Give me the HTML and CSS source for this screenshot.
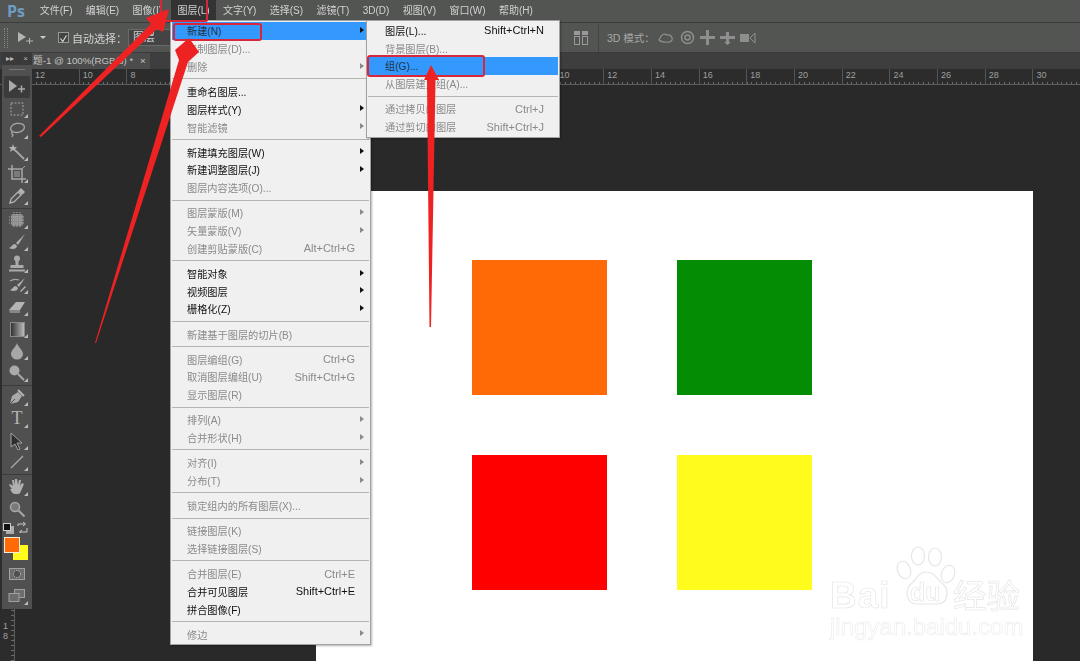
FILE: index.html
```html
<!DOCTYPE html>
<html lang="zh-CN">
<head>
  <meta charset="UTF-8">
  <title>Photoshop - 图层 新建 组</title>
  <link rel="stylesheet" href="styles.css">
</head>
<body>
  <div class="app">
    <!-- barre de menu -->
    <div class="menubar">
      <span class="ps-logo">Ps</span>
      <span class="mb-item">文件(F)</span>
      <span class="mb-item">编辑(E)</span>
      <span class="mb-item mb-wide">图像(I)</span>
      <span class="mb-item active">图层(L)</span>
      <span class="mb-item">文字(Y)</span>
      <span class="mb-item">选择(S)</span>
      <span class="mb-item">滤镜(T)</span>
      <span class="mb-item">3D(D)</span>
      <span class="mb-item">视图(V)</span>
      <span class="mb-item">窗口(W)</span>
      <span class="mb-item">帮助(H)</span>
    </div>

    <!-- options -->
    <div class="optionsbar">
      <span class="grip"></span>
      <svg class="opt-move" width="16" height="14" viewBox="0 0 16 14"><path d="M0 1l8 5-8 5z" fill="#b4b4b4"/><path d="M8 10h7M11.500 7v6" stroke="#b4b4b4"/></svg>
      <span class="opt-caret"></span>
      <span class="check"><svg width="11" height="11" viewBox="0 0 12 12"><path d="M2 6l3 4 5-8" fill="none" stroke="#ddd" stroke-width="1.500"/></svg></span>
      <span class="opt-label">自动选择：</span>
      <span class="opt-select">图层</span>
      <div class="opt-right">
        <svg width="16" height="16" viewBox="0 0 16 16" fill="none" stroke="#999"><rect x="1.500" y="1.500" width="5" height="3" fill="#999"/><rect x="9.500" y="1.500" width="5" height="3" fill="#999"/><rect x="1.500" y="6.500" width="5" height="8"/><rect x="9.500" y="6.500" width="5" height="8"/></svg>
        <span class="opt-sep"></span>
        <span class="opt-3d">3D 模式：</span>
        <svg class="ic3d" width="17" height="14" viewBox="0 0 17 14" fill="none" stroke="#999" stroke-width="1.200"><path d="M1 9c2-6 6-7 8-5 3-1 6 2 5 5s-10 3-13 0z"/></svg>
        <svg class="ic3d" width="15" height="15" viewBox="0 0 15 15" fill="none" stroke="#999" stroke-width="1.500"><circle cx="7.500" cy="7.500" r="6"/><circle cx="7.500" cy="7.500" r="2.500"/></svg>
        <svg class="ic3d" width="15" height="15" viewBox="0 0 15 15" fill="#999"><path d="M6 0h3v6h6v3H9v6H6V9H0V6h6z"/></svg>
        <svg class="ic3d" width="15" height="15" viewBox="0 0 15 15" fill="#999"><path d="M6 2h3v4h6v3H9v3l2 0-3.500 3L4 12h2V9H0V6h6z"/></svg>
        <svg class="ic3d" width="16" height="12" viewBox="0 0 16 12" fill="#999"><rect x="0" y="2" width="9" height="8"/><path d="M15 1v10l-5-5z" fill="none" stroke="#999"/></svg>
      </div>
    </div>

    <!-- onglet -->
    <div class="tabrow">
      <div class="tab">题-1 @ 100%(RGB/8) * <span class="tab-x">×</span></div>
    </div>

    <!-- regle horizontale -->
    <div class="ruler">
      <span>12</span><span>10</span><span>8</span><span>6</span><span>4</span><span>2</span><span>0</span><span>2</span><span>4</span><span>6</span><span>8</span><span>10</span><span>12</span><span>14</span><span>16</span><span>18</span><span>20</span><span>22</span><span>24</span><span>26</span><span>28</span><span>30</span>
    </div>

    <div class="workspace">
      <div class="vruler"><span>1</span><span>8</span></div>
      <div class="canvas">
        <div class="squares">
          <div class="sq orange"></div>
          <div class="sq green"></div>
          <div class="sq red"></div>
          <div class="sq yellow"></div>
        </div>
        <div class="watermark">
          <svg class="paw" width="62" height="62" viewBox="0 0 62 62" fill="#fff" stroke="#e6e6e6" stroke-width="1.200">
            <ellipse cx="9" cy="25" rx="6.500" ry="9" transform="rotate(-20 9 25)"/>
            <ellipse cx="23" cy="11" rx="6.500" ry="9"/>
            <ellipse cx="40" cy="12" rx="6.500" ry="9"/>
            <ellipse cx="53" cy="29" rx="6.500" ry="9" transform="rotate(20 53 29)"/>
            <path d="M31 27c-8 0-10 8-15 12-6 4-6 20 6 20h20c12 0 12-15 6-20-6-4-8-12-17-12z"/>
          </svg>
          <div class="wm-row"><span class="wm-bai">Bai</span><span class="wm-cn">经验</span></div>
          <span class="wm-du">du</span>
          <div class="wm-url">jingyan.baidu.com</div>
        </div>
      </div>
    </div>
  </div>

  <!-- panneau d'outils -->
  <div class="toolbar">
    <div class="tb-head"><span>▸▸</span><span>×</span></div>
    <div class="tb-grip"></div>
    <div class="tool current"><svg width="20" height="16" viewBox="0 0 20 16"><path d="M2 1l8 6-8 6z" fill="#d0d0d0"/><path d="M11 10h7M14.500 6.500v7" stroke="#d0d0d0" stroke-width="1.500"/></svg></div>
    <div class="tool more"><svg width="16" height="16" viewBox="0 0 16 16"><rect x="2" y="2" width="12" height="12" fill="none" stroke="#c4c4c4" stroke-dasharray="2 1.500"/></svg></div>
    <div class="tool more"><svg width="18" height="16" viewBox="0 0 18 16" fill="none" stroke="#c4c4c4" stroke-width="1.300"><ellipse cx="9.500" cy="6" rx="7" ry="4.500" transform="rotate(-10 9 6)"/><path d="M4 10c-1 2 0 2 1 3l-1 2"/></svg></div>
    <div class="tool more"><svg width="18" height="18" viewBox="0 0 18 18"><path d="M5 1l1 3 3 0-2 2 1 3-3-2-3 2 1-3-2-2 3 0z" fill="#d4d4d4"/><path d="M7 7l9 9" stroke="#c4c4c4" stroke-width="1.800"/></svg></div>
    <div class="tool more"><svg width="18" height="18" viewBox="0 0 18 18" fill="none" stroke="#c4c4c4" stroke-width="1.500"><path d="M4 0v14h14M0 4h14v14"/><path d="M14 4l3-3" stroke-width="1"/><rect x="6" y="6" width="6" height="6" fill="#8a8a8a" stroke="none"/></svg></div>
    <div class="tool more"><svg width="18" height="18" viewBox="0 0 18 18"><path d="M2 16l1-4 7-7 3 3-7 7z" fill="none" stroke="#d4d4d4" stroke-width="1.300"/><path d="M10 4l3-3 4 4-3 3z" fill="#d4d4d4"/></svg></div>
    <div class="tb-sep"></div>
    <div class="tool more"><svg width="18" height="18" viewBox="0 0 18 18"><rect x="3" y="3" width="12" height="12" rx="2" fill="#9a9a9a"/><path d="M1 6h16M1 9h16M1 12h16M6 1v16M9 1v16M12 1v16" stroke="#cfcfcf" stroke-dasharray="1 1"/></svg></div>
    <div class="tool more"><svg width="18" height="18" viewBox="0 0 18 18"><path d="M17 1L8 10l2 2z" fill="#d0d0d0"/><path d="M7 11c-3 0-3 3-6 4 3 2 8 1 8-2z" fill="#d0d0d0"/></svg></div>
    <div class="tool more"><svg width="18" height="18" viewBox="0 0 18 18" fill="#c8c8c8"><circle cx="9" cy="3.500" r="3"/><path d="M7.500 5h3v5h5v3h-13v-3h5z"/><rect x="1" y="14.500" width="16" height="2"/></svg></div>
    <div class="tool more"><svg width="18" height="18" viewBox="0 0 18 18"><path d="M17 1L9 8l2 2z" fill="#d0d0d0"/><path d="M8 9c-3 0-3 3-6 4 3 2 8 1 8-2zM17 9l-5 5 1 1 5-5z" fill="#d0d0d0"/><path d="M2 4c3-2 6-2 9-1" fill="none" stroke="#c0c0c0" stroke-width="1.300"/></svg></div>
    <div class="tool more"><svg width="18" height="16" viewBox="0 0 18 16"><path d="M1 11l7-8h9l-5 8z" fill="#d6d6d6"/><path d="M1 11h11v3H2z" fill="#9a9a9a"/></svg></div>
    <div class="tool more"><span class="grad"></span></div>
    <div class="tool more"><svg width="16" height="18" viewBox="0 0 16 18"><path d="M8 1c1 4 6 7 6 11a6 5.500 0 0 1-12 0c0-4 5-7 6-11z" fill="#c4c4c4"/></svg></div>
    <div class="tool more"><svg width="18" height="18" viewBox="0 0 18 18"><circle cx="6.500" cy="6.500" r="5" fill="#c8c8c8"/><path d="M10 10l6 6" stroke="#c4c4c4" stroke-width="2"/></svg></div>
    <div class="tb-sep"></div>
    <div class="tool more"><svg width="18" height="18" viewBox="0 0 18 18"><path d="M2 16l2-8 6-4 4 4-4 6z" fill="#c8c8c8"/><path d="M2 16l5-5" stroke="#4f4f4f"/><path d="M10 2l6 6" stroke="#d4d4d4" stroke-width="2"/></svg></div>
    <div class="tool more tool-t">T</div>
    <div class="tool more"><svg width="16" height="18" viewBox="0 0 16 18"><path d="M2 1l11 10H8l3 6-2 1-3-6-4 3z" fill="#222" stroke="#bdbdbd"/></svg></div>
    <div class="tool more"><svg width="16" height="16" viewBox="0 0 16 16"><path d="M2 14L14 2" stroke="#c8c8c8" stroke-width="1.300"/></svg></div>
    <div class="tb-sep"></div>
    <div class="tool more"><svg width="18" height="18" viewBox="0 0 18 18" fill="#d0d0d0"><path d="M4 11L1 7l1-1 3 2-1-6h2l1 5 0-6h2l1 6 1-5h2l-1 6 2-3 2 1-3 7c-1 3-2 3-5 3s-4-1-6-5z"/></svg></div>
    <div class="tool"><svg width="18" height="18" viewBox="0 0 18 18"><circle cx="7" cy="7" r="4.500" fill="#888" stroke="#c4c4c4" stroke-width="1.500"/><path d="M10.500 10.500l6 6" stroke="#c4c4c4" stroke-width="2"/></svg></div>
    <div class="swap">
      <span class="mini"></span>
      <svg width="11" height="11" viewBox="0 0 11 11" fill="none" stroke="#c8c8c8"><path d="M1 4V2h7M6 0l2.500 2L6 4M10 6v4H3M5 8l-2.500 2L5 12"/></svg>
    </div>
    <div class="colors"><span class="fg"></span><span class="bg"></span></div>
    <div class="tool"><svg width="16" height="12" viewBox="0 0 16 12"><rect x="0.500" y="0.500" width="15" height="11" fill="#777" stroke="#bbb"/><circle cx="8" cy="6" r="3.500" fill="#4f4f4f" stroke="#ddd" stroke-dasharray="1.500 1"/></svg></div>
    <div class="tool more"><svg width="18" height="14" viewBox="0 0 18 14" fill="#777" stroke="#bbb"><rect x="6.500" y="0.500" width="10" height="8"/><rect x="1" y="4.500" width="10" height="8"/></svg></div>
  </div>

  <!-- menu Calque -->
  <div class="menu main-menu">
    <div class="mi hl sub">新建(N)</div>
    <div class="mi off">复制图层(D)...</div>
    <div class="mi off sub">删除</div>
    <div class="msep"></div>
    <div class="mi">重命名图层...</div>
    <div class="mi sub">图层样式(Y)</div>
    <div class="mi off sub">智能滤镜</div>
    <div class="msep"></div>
    <div class="mi sub">新建填充图层(W)</div>
    <div class="mi sub">新建调整图层(J)</div>
    <div class="mi off">图层内容选项(O)...</div>
    <div class="msep"></div>
    <div class="mi off sub">图层蒙版(M)</div>
    <div class="mi off sub">矢量蒙版(V)</div>
    <div class="mi off">创建剪贴蒙版(C)<span class="key">Alt+Ctrl+G</span></div>
    <div class="msep"></div>
    <div class="mi sub">智能对象</div>
    <div class="mi sub">视频图层</div>
    <div class="mi sub">栅格化(Z)</div>
    <div class="msep"></div>
    <div class="mi off">新建基于图层的切片(B)</div>
    <div class="msep"></div>
    <div class="mi off">图层编组(G)<span class="key">Ctrl+G</span></div>
    <div class="mi off">取消图层编组(U)<span class="key">Shift+Ctrl+G</span></div>
    <div class="mi off">显示图层(R)</div>
    <div class="msep"></div>
    <div class="mi off sub">排列(A)</div>
    <div class="mi off sub">合并形状(H)</div>
    <div class="msep"></div>
    <div class="mi off sub">对齐(I)</div>
    <div class="mi off sub">分布(T)</div>
    <div class="msep"></div>
    <div class="mi off">锁定组内的所有图层(X)...</div>
    <div class="msep"></div>
    <div class="mi off">链接图层(K)</div>
    <div class="mi off">选择链接图层(S)</div>
    <div class="msep"></div>
    <div class="mi off">合并图层(E)<span class="key">Ctrl+E</span></div>
    <div class="mi">合并可见图层<span class="key">Shift+Ctrl+E</span></div>
    <div class="mi">拼合图像(F)</div>
    <div class="msep"></div>
    <div class="mi off sub">修边</div>
  </div>

  <!-- sous-menu Nouveau -->
  <div class="menu sub-menu">
    <div class="mi">图层(L)...<span class="key">Shift+Ctrl+N</span></div>
    <div class="mi off">背景图层(B)...</div>
    <div class="mi hl">组(G)...</div>
    <div class="mi off">从图层建立组(A)...</div>
    <div class="msep"></div>
    <div class="mi off">通过拷贝的图层<span class="key">Ctrl+J</span></div>
    <div class="mi off">通过剪切的图层<span class="key">Shift+Ctrl+J</span></div>
  </div>

  <!-- annotations -->
  <svg class="marks" width="1080" height="661" viewBox="0 0 1080 661">
    <g fill="none" stroke="#d8263a" stroke-width="2">
      <rect x="161" y="-2" width="46" height="23" rx="1"/>
      <rect x="174" y="24" width="87" height="16" rx="2"/>
      <rect x="368" y="56" width="116" height="20" rx="2"/>
    </g>
    <g fill="#ee2222">
      <polygon points="39,136 151,24 146,18 169,9 163,32 157,29 41,137"/>
      <polygon points="95,343 179,60 175,50 189,38 199,52 188,62 96,343"/>
      <polygon points="429.500,327 427,80 424,80 431,65 439,80 435.500,80 431,327"/>
    </g>
  </svg>
</body>
</html>
```

FILE: styles.css
```css
html, body {
  margin: 0;
  padding: 0;
}

body {
  width: 1080px;
  height: 661px;
  overflow: hidden;
  position: relative;
  font-family: "Liberation Sans", "Noto Sans CJK SC", sans-serif;
  background: #282928;
}

.app {
  display: flex;
  flex-direction: column;
  height: 661px;
}

/* Barre de menu */
.menubar {
  display: flex;
  align-items: center;
  height: 22px;
  background: #535553;
  border-bottom: 1px solid #3c3c3c;
  color: #d2d2d2;
  font-size: 10px;
}

.ps-logo {
  width: 33px;
  padding-left: 7px;
  box-sizing: border-box;
  color: #6f9cc4;
  font-family: "Open Sans", sans-serif;
  font-size: 16px;
  font-weight: 700;
  line-height: 20px;
}

.mb-item {
  padding: 0 6.7px;
  line-height: 22px;
  filter: blur(0.3px);
}

.mb-wide {
  min-width: 31.5px;
}

.mb-item.active {
  background: #333;
}

/* Options */
.optionsbar {
  display: flex;
  align-items: center;
  height: 29px;
  background: #535553;
  border-bottom: 1px solid #3a3a3a;
  color: #d2d2d2;
  font-size: 11px;
}

.grip {
  width: 4px;
  height: 20px;
  margin-left: 4px;
  border-left: 1px dotted #888;
  border-right: 1px dotted #888;
  box-sizing: border-box;
}

.opt-move {
  margin-left: 10px;
}

.opt-caret {
  width: 0;
  height: 0;
  margin-left: 6px;
  border: 3px solid transparent;
  border-top: 3px solid #ccc;
  margin-top: 3px;
}

.check {
  width: 9px;
  height: 9px;
  margin-left: 12px;
  background: #444;
  border: 1px solid #999;
  display: flex;
}

.opt-label {
  margin-left: 3px;
  width: 56px;
  filter: blur(0.3px);
}

.opt-select {
  width: 50px;
  height: 17px;
  line-height: 15px;
  padding-left: 4px;
  box-sizing: border-box;
  background: #444;
  border: 1px solid #6a6a6a;
  filter: blur(0.3px);
}

.opt-right {
  display: flex;
  align-items: center;
  margin-left: 395px;
  color: #a8a8a8;
}

.opt-sep {
  width: 1px;
  height: 28px;
  background: #444;
  margin: 0 8px 0 9px;
}

.opt-3d {
  width: 51px;
  font-size: 10.5px;
}

.ic3d {
  margin-right: 5px;
  opacity: 0.85;
  filter: blur(0.4px);
}

/* Onglet */
.tabrow {
  height: 16px;
  background: #3d3e3d;
}

.tab {
  width: 118px;
  height: 16px;
  margin-left: 32px;
  padding-left: 1px;
  box-sizing: border-box;
  background: #4b4c4b;
  color: #c4c4c4;
  font-size: 9.7px;
  line-height: 16px;
  white-space: nowrap;
}

.tab-x {
  margin-left: 4px;
}

/* Regles */
.ruler {
  display: flex;
  height: 15px;
  padding-left: 31px;
  background:
    repeating-linear-gradient(90deg, #6a6a6a 0 1px, transparent 1px 4.77px) 31px 100% / 100% 2px no-repeat,
    #2b2c2b;
  border-bottom: 1px solid #5c5c5c;
  color: #a0a0a0;
  font-size: 9px;
}

.ruler span {
  flex: 0 0 47.7px;
  box-sizing: border-box;
  padding-left: 3px;
  line-height: 13px;
  border-left: 1px solid #555;
  height: 15px;
}

.workspace {
  display: flex;
  flex: 1;
  min-height: 0;
}

.vruler {
  width: 15px;
  box-sizing: border-box;
  padding-top: 536px;
  background:
    repeating-linear-gradient(180deg, #6a6a6a 0 1px, transparent 1px 5px) 100% 0 / 3px 100% no-repeat,
    #2b2c2b;
  border-right: 1px solid #5c5c5c;
  color: #a0a0a0;
  font-size: 9px;
  line-height: 10px;
  text-align: center;
}

.vruler span {
  display: block;
  width: 11px;
}

/* Document */
.canvas {
  width: 717px;
  height: 470px;
  margin: 106px 0 0 301px;
  padding: 69px 0 0 156px;
  box-sizing: border-box;
  background: #fff;
  position: relative;
}

.squares {
  display: grid;
  grid-template-columns: 135px 135px;
  grid-auto-rows: 135px;
  column-gap: 70px;
  row-gap: 60px;
}

.orange { background: #ff6a06; }
.green { background: #048d04; }
.red { background: #ff0000; }
.yellow { background: #fffb1c; }

/* Filigrane */
.watermark {
  position: absolute;
  left: 514px;
  top: 354px;
  width: 190px;
  height: 100px;
  filter: blur(0.4px);
}

.paw {
  position: absolute;
  left: 65px;
  top: 0;
}

.wm-row {
  position: absolute;
  left: 0;
  right: 0;
  top: 24px;
  display: flex;
  justify-content: space-between;
  align-items: baseline;
  color: #fff;
  -webkit-text-stroke: 0.7px #e6e6e6;
  font-weight: 700;
}

.wm-bai {
  font-size: 37px;
  letter-spacing: 1px;
}

.wm-cn {
  font-size: 33.5px;
  font-weight: 400;
}

.wm-du {
  position: absolute;
  left: 80px;
  top: 33px;
  color: #fff;
  -webkit-text-stroke: 0.6px #e4e4e4;
  font-size: 25px;
  font-weight: 700;
}

.wm-url {
  position: absolute;
  left: 0;
  top: 68px;
  color: #fff;
  -webkit-text-stroke: 0.6px #ececec;
  font-size: 24px;
  white-space: nowrap;
}

/* Outils */
.toolbar {
  position: absolute;
  left: 2px;
  top: 52px;
  width: 30px;
  height: 557px;
  background: #505050;
  box-sizing: border-box;
}

.tb-head {
  display: flex;
  justify-content: space-between;
  height: 13px;
  padding: 0 4px;
  background: #3a3a3a;
  color: #bbb;
  font-size: 8px;
  line-height: 13px;
}

.tb-grip {
  height: 11px;
  background: linear-gradient(#777, #777) 7px 4px / 16px 1px no-repeat;
}

.tool {
  position: relative;
  display: flex;
  align-items: center;
  justify-content: center;
  height: 21.8px;
}

.tool svg {
  opacity: 0.75;
  filter: blur(0.4px);
}

.tool.current {
  background: #3b3b3b;
  margin: 0 2px;
  border-radius: 2px;
}

.tool.more::after {
  content: "";
  position: absolute;
  right: 4px;
  bottom: 2px;
  border: 2px solid transparent;
  border-right-color: #bbb;
  border-bottom-color: #bbb;
}

.tb-sep {
  height: 2.5px;
  background: linear-gradient(#3c3c3c, #3c3c3c) 0 1px / 100% 1px no-repeat;
}

.grad {
  width: 13px;
  height: 13px;
  background: linear-gradient(90deg, #333, #bbb);
  border: 1px solid #8a8a8a;
}

.tool-t {
  color: #b4b4b4;
  font-family: "Liberation Serif", serif;
  font-size: 18px;
}

.swap {
  display: flex;
  justify-content: space-between;
  align-items: center;
  height: 12px;
  margin-top: 2px;
  padding: 0 4px 0 1px;
}

.mini {
  width: 6px;
  height: 6px;
  background: #111;
  border: 1px solid #ccc;
  box-shadow: 3px 3px 0 #aaa;
}

.colors {
  position: relative;
  height: 26px;
  margin: 4px 0 0 2px;
}

.fg {
  position: absolute;
  left: 0;
  top: 0;
  z-index: 1;
  width: 14px;
  height: 14px;
  background: #ff6a06;
  border: 1px solid #eed;
}

.bg {
  position: absolute;
  left: 9px;
  top: 8px;
  width: 15px;
  height: 15px;
  background: #fffb1c;
}

/* Menus */
.menu {
  position: absolute;
  background: #f0f0f0;
  border: 1px solid #a2a2a2;
  box-sizing: border-box;
  color: #111;
  font-size: 10.2px;
  box-shadow: 1px 1px 2px rgba(0, 0, 0, 0.3);
}

.main-menu {
  left: 170px;
  top: 20px;
  width: 201px;
  height: 625px;
  padding: 1px;
}

.sub-menu {
  left: 366px;
  top: 20px;
  width: 194px;
  height: 118px;
  padding: 0.5px 1px 1px;
}

.mi {
  position: relative;
  display: flex;
  align-items: center;
  justify-content: space-between;
  height: 17.75px;
  padding: 0 14px 0 15px;
  white-space: nowrap;
  filter: blur(0.3px);
}

.sub-menu .mi {
  padding: 0 14px 0 17px;
}

.mi.off {
  color: #8a8a8a;
}

.mi.hl {
  background: #3399ff;
  color: #234;
  filter: none;
}

.mi.sub::after {
  content: "";
  position: absolute;
  right: 5px;
  top: 5px;
  border: 3.500px solid transparent;
  border-left: 4px solid #111;
  border-right: 0;
}

.mi.off.sub::after {
  border-left-color: #8a8a8a;
}

.key {
  font-size: 11px;
}

.msep {
  height: 7.4px;
  background: linear-gradient(#b4b4b4, #b4b4b4) 0 3px / 100% 1px no-repeat;
}

/* Annotations */
.marks {
  position: absolute;
  left: 0;
  top: 0;
  pointer-events: none;
}
```
